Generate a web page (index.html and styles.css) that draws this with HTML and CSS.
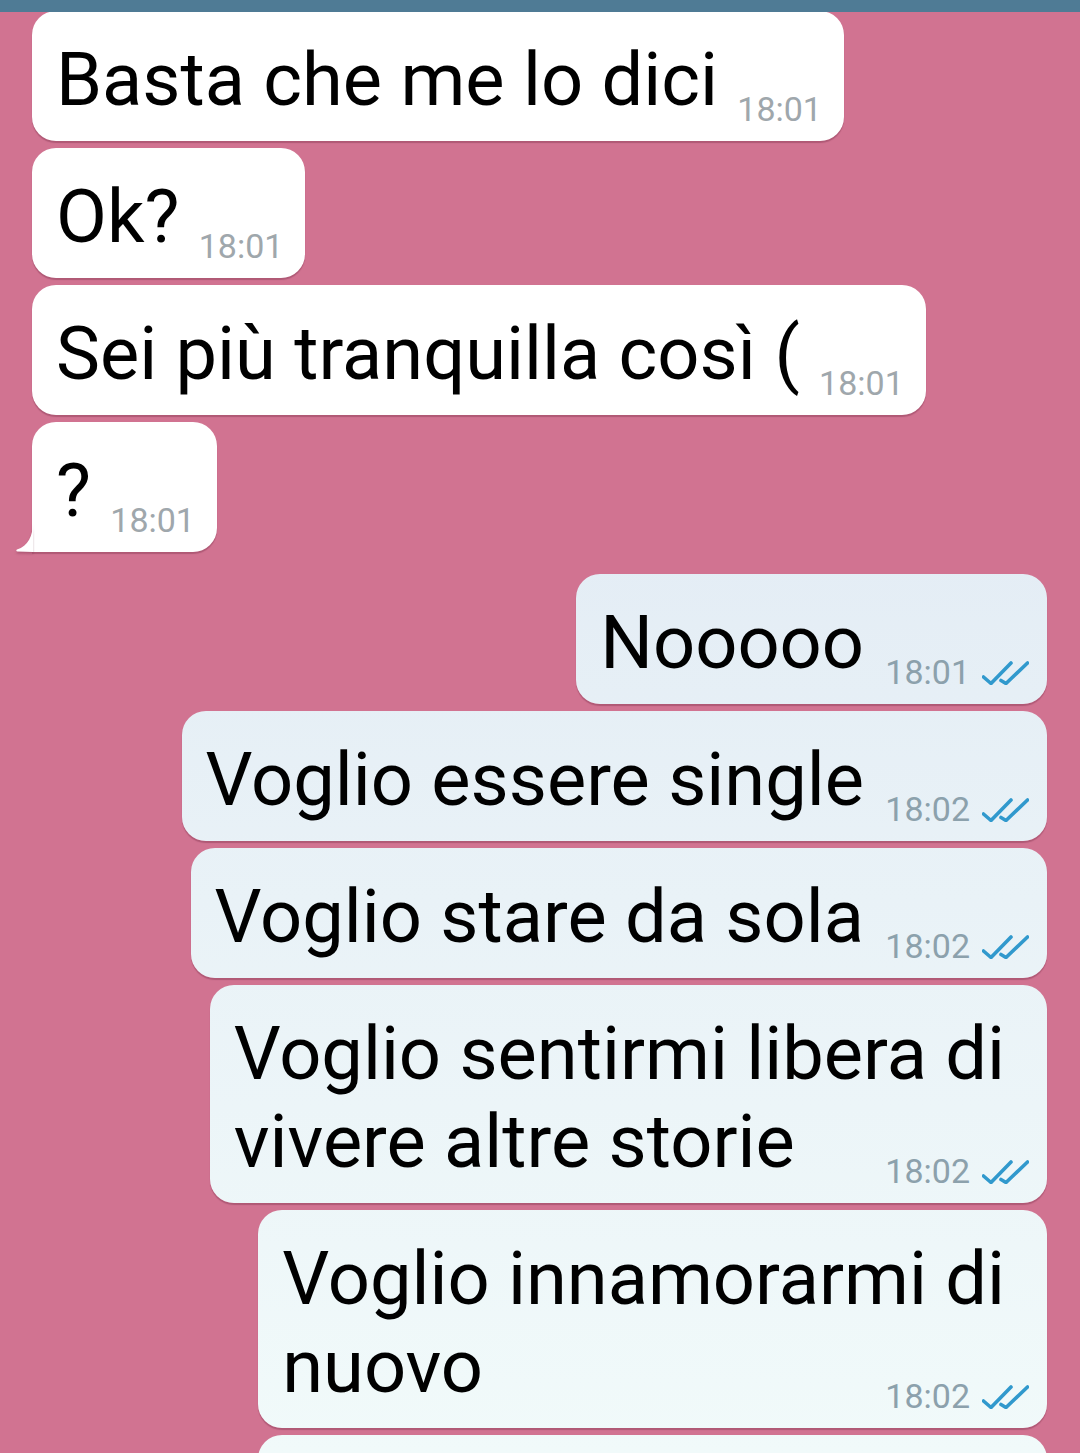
FILE: index.html
```html
<!DOCTYPE html>
<html lang="it">
<head>
  <meta charset="UTF-8" />
  <meta name="viewport" content="width=device-width, initial-scale=1.0"/>
  <title>Chat</title>
  <link rel="stylesheet" href="styles.css">
</head>
<body>

  <div class="status-bar"></div>

  <main class="chat">
    <div class="msg in">
      <p class="text">Basta che me lo dici<span class="spacer in-space"></span></p>
      <span class="meta"><span class="time">18:01</span></span>
    </div>

    <div class="msg in">
      <p class="text">Ok?<span class="spacer in-space"></span></p>
      <span class="meta"><span class="time">18:01</span></span>
    </div>

    <div class="msg in">
      <p class="text">Sei più tranquilla così (<span class="spacer in-space"></span></p>
      <span class="meta"><span class="time">18:01</span></span>
    </div>

    <div class="row-tail">
      <svg class="tail" width="17" height="30" viewBox="0 0 17 30">
        <path d="M17 0 C17 14 12 24 1 27.5 C0 27.8 0 29.4 1.5 29.6 L17 30 Z" fill="#fff"/>
      </svg>
      <div class="msg in last">
        <p class="text">?<span class="spacer in-space"></span></p>
        <span class="meta"><span class="time">18:01</span></span>
      </div>
    </div>

    <div class="msg out first">
      <p class="text">Nooooo<span class="spacer out-space"></span></p>
      <span class="meta">
        <span class="time">18:01</span>
        <svg class="checks" width="47" height="24" viewBox="0 0 47 24">
          <polyline points="1.5,16 9,22.5 29,2" />
          <polyline points="19,19.5 24,22.5 45.5,2" />
        </svg>
      </span>
    </div>

    <div class="msg out">
      <p class="text">Voglio essere single<span class="spacer out-space"></span></p>
      <span class="meta">
        <span class="time">18:02</span>
        <svg class="checks" width="47" height="24" viewBox="0 0 47 24">
          <polyline points="1.5,16 9,22.5 29,2" />
          <polyline points="19,19.5 24,22.5 45.5,2" />
        </svg>
      </span>
    </div>

    <div class="msg out">
      <p class="text">Voglio stare da sola<span class="spacer out-space"></span></p>
      <span class="meta">
        <span class="time">18:02</span>
        <svg class="checks" width="47" height="24" viewBox="0 0 47 24">
          <polyline points="1.5,16 9,22.5 29,2" />
          <polyline points="19,19.5 24,22.5 45.5,2" />
        </svg>
      </span>
    </div>

    <div class="msg out multi">
      <p class="text">Voglio sentirmi libera di<br>vivere altre storie<span class="spacer out-space"></span></p>
      <span class="meta">
        <span class="time">18:02</span>
        <svg class="checks" width="47" height="24" viewBox="0 0 47 24">
          <polyline points="1.5,16 9,22.5 29,2" />
          <polyline points="19,19.5 24,22.5 45.5,2" />
        </svg>
      </span>
    </div>

    <div class="msg out multi">
      <p class="text">Voglio innamorarmi di<br>nuovo<span class="spacer out-space"></span></p>
      <span class="meta">
        <span class="time">18:02</span>
        <svg class="checks" width="47" height="24" viewBox="0 0 47 24">
          <polyline points="1.5,16 9,22.5 29,2" />
          <polyline points="19,19.5 24,22.5 45.5,2" />
        </svg>
      </span>
    </div>

    <div class="msg out cut"></div>
  </main>

</body>
</html>
```

FILE: styles.css
```css
html, body {
  height: 100%;
  overflow: hidden;
}

body {
  margin: 0;
  padding: 0;
  background-color: #d17391;
  font-family: Roboto, "Noto Sans", Arial, sans-serif;
  color: #000;
}

.status-bar {
  position: relative;
  z-index: 1;
  height: 12px;
  background-color: #4f7b95;
}

.chat {
  display: flex;
  flex-direction: column;
  align-items: flex-start;
  gap: 7px;
  margin-top: -1px;
  padding: 0 33px 0 32px;
}

/* bubble */
.msg {
  display: grid;
  padding: 25px 18px 17px 24px;
  border-radius: 24px;
  box-shadow: 0 2px 1px rgba(90, 20, 45, 0.28);
}

.msg .text,
.msg .meta {
  grid-area: 1 / 1;
}

.text {
  margin: 0;
  font-size: 74px;
  line-height: 88px;
  white-space: nowrap;
}

.spacer {
  display: inline-block;
  height: 1px;
}

.in-space {
  width: 104px;
}

.out-space {
  width: 165px;
}

.meta {
  justify-self: end;
  align-self: end;
  display: inline-flex;
  align-items: baseline;
  gap: 12px;
  margin-bottom: -2px;
  font-size: 34px;
  line-height: 34px;
}

.in {
  background-color: #fff;
  padding-right: 22px;
}

.in .time {
  color: #9fa7ac;
}

.out {
  align-self: flex-end;
  background: linear-gradient(180deg, #dce5f2 0px, #f1fafa 1453px) fixed;
}

.out .time {
  color: #8ca1ac;
}

.out.first {
  margin-top: 15px;
}

.multi .text {
  padding-right: 24px;
}

.checks {
  position: relative;
  top: 1px;
  fill: none;
  stroke: #3199cd;
  stroke-width: 3.6;
  stroke-linecap: round;
  stroke-linejoin: round;
}

/* last incoming bubble with tail */
.row-tail {
  display: flex;
  align-items: flex-end;
  margin-left: -16px;
}

.tail {
  display: block;
  margin-right: -1px;
  filter: drop-shadow(0 2px 1px rgba(90, 20, 45, 0.28));
}

.msg.last {
  border-bottom-left-radius: 0;
}

.cut {
  width: 747px;
  height: 130px;
}
```
